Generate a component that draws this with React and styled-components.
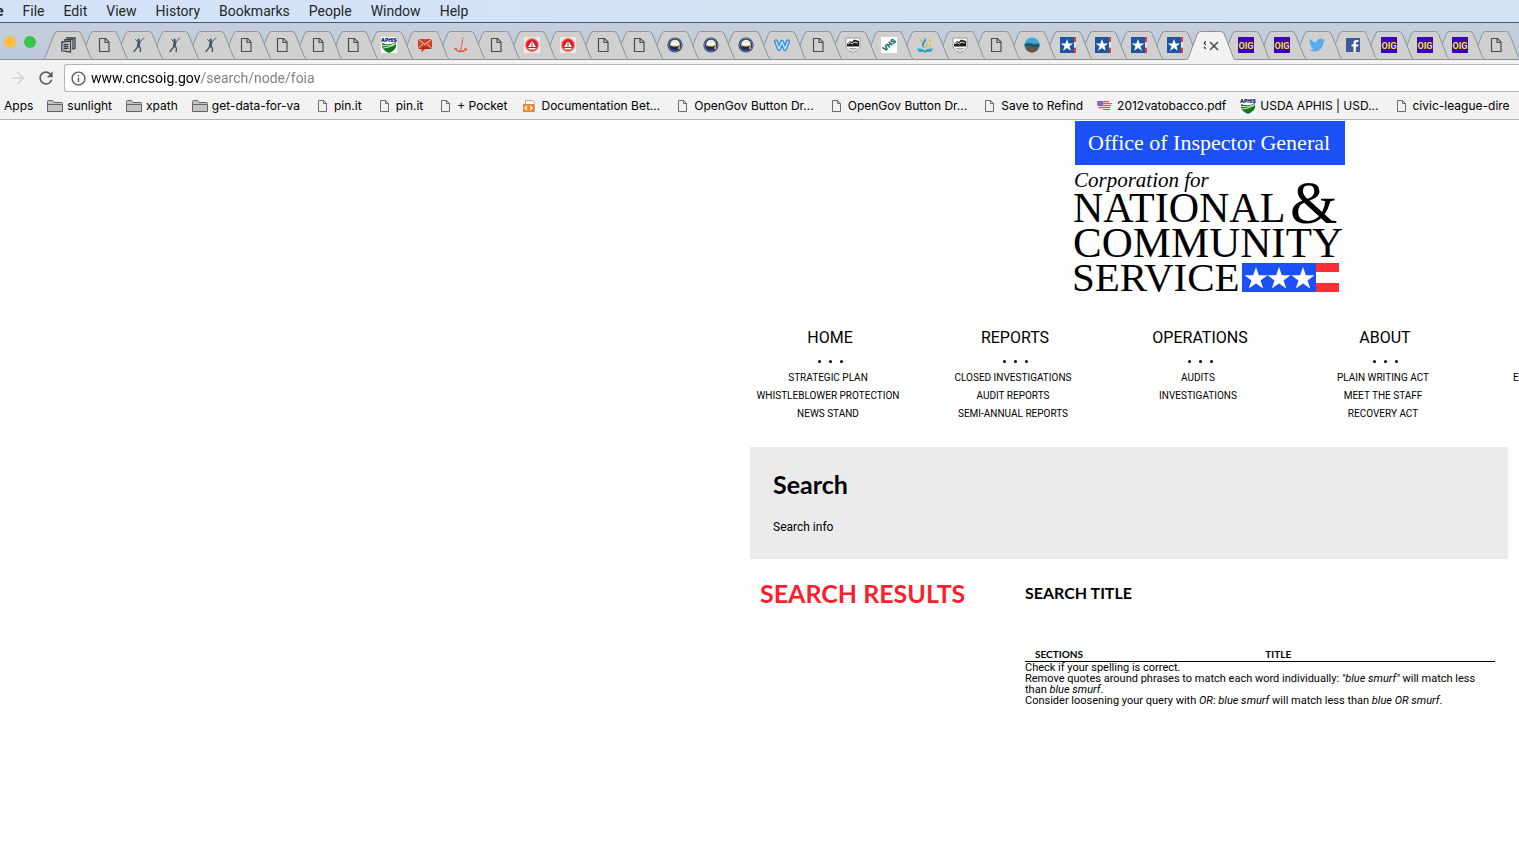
import React from 'react';
import styled, { createGlobalStyle } from 'styled-components';
import { MdRefresh, MdArrowForward, MdInfoOutline } from 'react-icons/md';
import { FaTwitter } from 'react-icons/fa';

const GlobalStyle = createGlobalStyle`
  *, *::before, *::after { box-sizing: border-box; }
  body {
    margin: 0;
    background: #fff;
    color: #000;
    font-family: Roboto, "Liberation Sans", sans-serif;
    overflow-x: hidden;
  }
  ul, h1, h2, h3, p { margin: 0; padding: 0; }
  ul { list-style: none; }
  a { color: inherit; text-decoration: none; }
  button { border: 0; padding: 0; background: none; font: inherit; color: inherit; }
`;

/* ---------- system menu bar ---------- */

const MenuBar = styled.nav`
  display: flex;
  align-items: center;
  gap: 19px;
  height: 23px;
  background: linear-gradient(90deg, #d3e2f5, #d4e3f3);
  border-bottom: 1px solid #34548a;
  color: #24272c;
  font-size: 14px;
  line-height: 22px;
  white-space: nowrap;
  overflow: hidden;
`;
const AppName = styled.strong`
  margin-left: -4px;
`;
const MenuButton = styled.button`
  flex: none;
`;

/* ---------- tab strip ---------- */

const TabStrip = styled.div`
  display: flex;
  height: 37px;
  padding-top: 8px;
  padding-right: 5px;
  background: linear-gradient(#c6cfdb, #bccada);
  border-bottom: 1px solid #8a919b;
`;
const WindowControls = styled.div`
  display: flex;
  gap: 8px;
  flex: none;
  width: 50px;
  padding: 5px 0 0 4px;
`;
const WindowButton = styled.button`
  width: 12px;
  height: 12px;
  border-radius: 50%;
  background: ${(p) => p.$fill};
`;
const Tabs = styled.div`
  display: flex;
  flex: 1;
  min-width: 0;
`;
const Tab = styled.button`
  position: relative;
  z-index: ${(p) => p.$layer};
  flex: 1 1 0;
  min-width: 0;
  display: flex;
  align-items: center;
  justify-content: center;
  height: ${(p) => (p.$active ? 29 : 28)}px;
  font-size: 11px;
`;
const TabOutline = styled.svg`
  position: absolute;
  top: 0;
  left: -7px;
  width: calc(100% + 14px);
  height: 100%;
  fill: ${(p) => (p.$active ? '#f2f2f2' : '#d0d0d0')};
  stroke: #8a919b;
`;
const Favicon = styled.svg`
  position: relative;
  width: 16px;
  height: 16px;
  flex: none;
`;
const ActiveTitle = styled.span`
  position: relative;
  width: 3px;
  margin-left: 5px;
  overflow: hidden;
`;

/* ---------- toolbar ---------- */

const Toolbar = styled.div`
  display: flex;
  align-items: center;
  height: 32px;
  padding-left: 8px;
  padding-top: 4px;
  background: #f2f2f2;
`;
const ToolButton = styled.button`
  display: flex;
  align-items: center;
  justify-content: center;
  width: 20px;
  height: 20px;
  margin-right: 8px;
  color: ${(p) => (p.$disabled ? '#d4d4d4' : '#5f5f5f')};
`;
const AddressBox = styled.label`
  flex: 1;
  display: flex;
  align-items: center;
  gap: 4px;
  height: 28px;
  padding-left: 5px;
  border: 1px solid #b3b3b3;
  border-right: 0;
  border-radius: 3px 0 0 3px;
  background: #fff;
  color: #5a5a5a;
`;
const AddressInput = styled.input`
  flex: 1;
  min-width: 0;
  border: 0;
  padding: 0;
  outline: 0;
  font: 14px/20px Roboto, "Liberation Sans", sans-serif;
  color: transparent;
  background: linear-gradient(90deg, #000 110px, #7c7c7c 110px);
  -webkit-background-clip: text;
  background-clip: text;
`;

/* ---------- bookmarks ---------- */

const BookmarkBar = styled.nav`
  display: flex;
  align-items: center;
  gap: 14px;
  height: 28px;
  padding-left: 4px;
  background: #f2f2f2;
  border-bottom: 1px solid #b1b1b1;
  font: 12px/16px Inter, "Liberation Sans", sans-serif;
  white-space: nowrap;
  overflow: hidden;
`;
const Bookmark = styled.a`
  display: flex;
  align-items: center;
  gap: 4px;
  flex: none;
`;

/* ---------- site ---------- */

const Site = styled.main`
  display: grid;
  grid-template-columns: 750fr 769fr;
  overflow: hidden;
`;
const Page = styled.div`
  grid-column: 2;
  min-width: 0;
`;
const Header = styled.header`
  padding: 1px 0 0 321px;
`;
const Logo = styled.svg`
  display: block;
  width: 276px;
  height: 175px;
  font-family: "Liberation Serif", serif;
`;
const SiteNav = styled.nav`
  display: flex;
  gap: 25px;
  padding: 30px 0 24px;
`;
const NavColumn = styled.section`
  flex: none;
  width: 160px;
  text-align: center;
`;
const NavTitle = styled.h3`
  font-size: 16px;
  font-weight: 400;
  line-height: 24px;
`;
const Dots = styled.p`
  display: flex;
  justify-content: center;
  gap: 8px;
  padding: 10px 0 6px;
`;
const Dot = styled.span`
  width: 3px;
  height: 3px;
  border-radius: 50%;
  background: #000;
`;
const NavList = styled.ul`
  padding-right: 4px;
  font-size: 10px;
  line-height: 18px;
`;
const NavEdge = styled(NavColumn)`
  padding-top: 43px;
  padding-left: 23px;
  text-align: left;
`;
const SearchPanel = styled.section`
  margin-right: 11px;
  padding: 21px 23px 22px;
  background: #ebebeb;
`;
const PanelTitle = styled.h1`
  font: 700 25px/32px Lato, sans-serif;
`;
const PanelText = styled.p`
  margin-top: 17px;
  font-size: 12px;
  line-height: 20px;
`;
const Results = styled.section`
  display: flex;
  padding: 18px 24px 0 10px;
`;
const ResultsTitle = styled.h2`
  flex: none;
  width: 265px;
  color: #fb1f2e;
  font: 700 25px/32px Lato, sans-serif;
`;
const ResultsBody = styled.div`
  flex: 1;
  min-width: 0;
`;
const SearchTitle = styled.h3`
  margin-bottom: 37px;
  font: 700 16px/32px Lato, sans-serif;
`;
const ResultTable = styled.table`
  width: 100%;
  border-collapse: collapse;
  table-layout: fixed;
  font-size: 11px;
  line-height: 11px;

  th {
    padding: 2px 10px 1px;
    border-bottom: 1px solid #000;
    font: 700 10px/12px Lato, sans-serif;
    text-align: left;
  }
  th:first-child { width: 49%; }
  td { padding: 0; }
`;

/* ---------- icons ---------- */

const PageIcon = () => (
  <g fill="none" stroke="#4c4c4c" strokeWidth="1.2">
    <path d="M3.500 1.500h6l3.500 3.500v9.500h-9.500z" />
    <path d="M9 1.500v4h4" />
  </g>
);
const SmallPageIcon = () => (
  <g fill="none" stroke="#6b6b6b">
    <path d="M4.500 2.500h5l3 3v8h-8z" />
    <path d="M9.500 2.500v3h3" />
  </g>
);
const FolderIcon = () => (
  <g fill="#c4c4c4" stroke="#666">
    <path d="M.5 13.500v-10q0-1 1-1h4l1.500 2h7.500q1 0 1 1v8z" />
    <path d="M.5 6.500h15" fill="none" />
  </g>
);
const StackIcon = () => (
  <g fill="#d0d0d0" stroke="#3b4148" strokeWidth="1.3">
    <path d="M6 1l9-.2v10.500l-2 .5" fill="none" />
    <path d="M4 3l9-.6v10" />
    <path d="M1.800 5l8.700-1v11l-8.700-1.200z" />
    <path d="M3.500 7.500h5M3.500 9.500h5M3.500 11.500h5" />
  </g>
);
const RunnerIcon = () => (
  <g fill="none" stroke="#3f5763" strokeLinecap="round">
    <circle cx="7.500" cy="3" r=".8" fill="#3f5763" />
    <path d="M4.500 2.500l2.500 2.500 2 .2L12.500 1" />
    <path d="M8 5.500L7.300 9" strokeWidth="2.800" />
    <path d="M7 9.500l-4 5" strokeWidth="1.300" />
    <path d="M8.200 9.500l1.300 2-.3 3" strokeWidth="1.300" />
  </g>
);
const AphisIcon = () => (
  <g>
    <path d="M0 0h16v16H0z" fill="#fff" />
    <text x="8" y="4.500" textAnchor="middle" fontSize="5" fontWeight="900" fill="#14146e" fontFamily="Inter, sans-serif">APHIS</text>
    <path d="M1 6q7 3 14-1v4q0 4-7 7-7-3-7-7z" fill="#137a1c" />
    <path d="M1 8.500q7 1.500 14-2M2 11q5 0 12-3.500" stroke="#fff" strokeWidth=".8" fill="none" />
  </g>
);
const MailIcon = () => (
  <g>
    <path d="M1 2h14v10H8l-3.500 3.500V12H1z" fill="#cf4129" />
    <path d="M1 2l7 5.500L15 2M1 12l5-5.500M15 12l-5-5.500" stroke="#f5d9d3" strokeWidth=".9" fill="none" />
    <path d="M1 12h14l-4-2H5z" fill="#a52c1b" />
  </g>
);
const AnchorIcon = () => (
  <g fill="none" stroke="#e0513a">
    <path d="M10 .5L7.500 14" strokeDasharray="1.500 .6" strokeWidth="1.200" />
    <path d="M2.500 11.500q1.500 3 5 3t5.500-2.500" strokeWidth="1.300" />
    <path d="M2 13v-2l2 1M11.500 11.500l2 .2v2" strokeWidth=".8" />
  </g>
);
const RedSealIcon = () => (
  <g>
    <path d="M0 0h16v16H0z" fill="#f2e6e2" />
    <circle cx="8" cy="8" r="7" fill="#e9806f" />
    <circle cx="8" cy="8" r="5.800" fill="#e01528" />
    <path d="M8 3.500l4 6.500H4z" fill="#fff" />
    <path d="M7.500 4h1v6h-1z" fill="#27694a" />
    <path d="M4 11h8l-1.500 1.500h-5z" fill="#fff" />
  </g>
);
const BlueSealIcon = () => (
  <g>
    <circle cx="8" cy="8" r="7.600" fill="#263a6c" />
    <circle cx="8" cy="8" r="6.600" fill="none" stroke="#8b93a8" strokeWidth=".7" />
    <circle cx="8" cy="7.500" r="4.800" fill="#efe9d8" />
    <path d="M3.500 9q4.500-1.500 9 0l-1 2.500q-3.500 2-7 0z" fill="#17275c" />
    <path d="M5 6h6v3H5z" fill="#fff" />
    <path d="M5.500 8.500h5v1.200h-5zM11 10l2-1v3h-2z" fill="#d99b2e" />
  </g>
);
const WIcon = () => (
  <g fill="none" strokeLinecap="round" strokeLinejoin="round">
    <path d="M2 4.500l3 7.500 3-7 3 7 3-7.500" stroke="#3191ea" strokeWidth="4.200" />
    <path d="M2 4.500l3 7.500 3-7 3 7 3-7.500" stroke="#d7e3ee" strokeWidth="1.400" />
  </g>
);
const ShieldIcon = () => (
  <g>
    <path d="M1 1h14v8q0 4-7 6.500Q1 13 1 9z" fill="#fff" stroke="#888" strokeWidth=".8" />
    <path d="M2 9.500V7l3-3 2 1 2-2.500 5 1.500v5.500z" fill="#1c1c1c" />
    <path d="M3 7l2-1.500L7.500 7 9 5l4 1" stroke="#ddd" fill="none" />
    <path d="M4 11.500h8M5.500 13h5" stroke="#777" strokeWidth=".7" />
  </g>
);
const VhsIcon = () => (
  <g>
    <path d="M0 0h16v16H0z" fill="#fff" />
    <text x="8" y="10.500" textAnchor="middle" fontSize="7" fontWeight="900" fill="#0b6a5c" fontFamily="Inter, sans-serif" transform="rotate(-42 8 8)">VHS</text>
  </g>
);
const FlameBookIcon = () => (
  <g>
    <path d="M0 11.500q5-.5 8 2 3-2.500 8-2L14 15q-4-.5-6 .8Q6 14.500 2 15z" fill="#23a5c9" />
    <path d="M8.500.5Q10 3 8 5.500T7.500 11Q3.500 9 5.500 5.500 7 3.500 8.500.5z" fill="#1fa3df" />
    <path d="M10 5.500q1.500 3-1.500 6-1.500-2 1.500-6z" fill="#f0b429" />
    <path d="M4 1.500l.7 1.300 1.300.7-1.300.7L4 5.500l-.7-1.300L2 3.500l1.300-.7zM13 1.500l.7 1.300 1.800.7-1.800.7-.7 1.300-.7-1.300-1.300-.7 1.300-.7zM13 7.500l1.500 1.500-1.500 1.500L11.500 9z" fill="#efb93f" />
  </g>
);
const RiverIcon = () => (
  <g>
    <circle cx="8" cy="8" r="7.500" fill="#3fa9dc" />
    <path d="M.6 7q3-2 7-1t7.800 0q.4 4-1.400 6H2Q.5 10 .6 7z" fill="#317255" />
    <path d="M.7 8.500q3.500-1.500 7.300 0t7.300-.5" stroke="#28417f" strokeWidth="1.600" fill="none" />
    <path d="M2 12.200q2-2.500 6-2t6 2q-2.500 3.300-6 3.300t-6-3.300z" fill="#6b5546" />
  </g>
);
const star = 'M0-5L1.200-1.600H4.800L1.900.6 3 4 0 1.900-3 4-1.900.6-4.800-1.600H-1.200z';
const StarIcon = () => (
  <g>
    <path d="M0 0h14v16H0z" fill="#1d55a3" />
    <path d="M14 0h2v5h-2zM14 10.500h2V16h-2z" fill="#e23b41" />
    <path d="M14 5h2v5.500h-2z" fill="#e8e4ea" />
    <path d={star} fill="#fff" transform="translate(7 8.500) scale(1.300)" />
  </g>
);
const OigIcon = () => (
  <g>
    <path d="M0 0h16v16H0z" fill="#3b06b8" />
    <text x="8" y="12" textAnchor="middle" fontSize="9" fontWeight="700" fill="#f4e81d" fontFamily="Roboto, sans-serif">OIG</text>
  </g>
);
const FacebookIcon = () => (
  <g>
    <path d="M1 1h14v14H1z" fill="#3d5a98" />
    <path d="M8.500 15V9.500h-2v-2h2V6q0-3 3-3h2v2h-1.400q-1.300 0-1.300 1.300v1.200h2.600l-.4 2h-2.200V15z" fill="#fff" />
  </g>
);
const TwitterIcon = () => <FaTwitter size={16} color="#55acee" />;
const CloseIcon = () => <path d="M4 4l8 8M12 4l-8 8" stroke="#4f4f4f" strokeWidth="1.600" />;
const CodeDocIcon = () => (
  <g>
    <path d="M4.500 2.500h7l2 2v9h-9z" fill="#fff" stroke="#aaa" />
    <path d="M2 6h11v8H2z" fill="#ee8a2c" />
    <path d="M6 8l-2 2 2 2M9 8l2 2-2 2" stroke="#fff" strokeWidth="1.300" fill="none" />
  </g>
);
const UsaIcon = () => (
  <g>
    <path d="M0 3h11l1 1.500L15.500 3 15 6l-2 3 1 4-3-2-3 1-1.500 1-2-2.500L1 9.500 0 6z" fill="#fff" />
    <path d="M6 3.700h6M6 5.700h9M.5 7.700h13.500M1.500 9.700h11.500M6 11.500h7" stroke="#e0525b" strokeWidth="1.200" />
    <path d="M0 3h6v4.500H.3z" fill="#6f6fd8" />
  </g>
);

const icons = {
  page: PageIcon, small: SmallPageIcon, folder: FolderIcon, stack: StackIcon, runner: RunnerIcon,
  aphis: AphisIcon, mail: MailIcon, anchor: AnchorIcon, redSeal: RedSealIcon, blueSeal: BlueSealIcon,
  w: WIcon, shield: ShieldIcon, vhs: VhsIcon, flame: FlameBookIcon, river: RiverIcon, star: StarIcon,
  oig: OigIcon, twitter: TwitterIcon, facebook: FacebookIcon, code: CodeDocIcon, usa: UsaIcon,
};

function Icon({ name }) {
  const Drawing = icons[name];
  return <Favicon viewBox="0 0 16 16" aria-hidden="true"><Drawing /></Favicon>;
}

/* ---------- data ---------- */

const menus = ['File', 'Edit', 'View', 'History', 'Bookmarks', 'People', 'Window', 'Help'];

const tabs = (
  'stack page runner runner runner page page page page aphis mail anchor page redSeal redSeal page page ' +
  'blueSeal blueSeal blueSeal w page shield vhs flame shield page river star star star star active ' +
  'oig oig twitter facebook oig oig oig page'
).split(' ');

const bookmarks = [
  [null, 'Apps'],
  ['folder', 'sunlight'],
  ['folder', 'xpath'],
  ['folder', 'get-data-for-va'],
  ['small', 'pin.it'],
  ['small', 'pin.it'],
  ['small', '+ Pocket'],
  ['code', 'Documentation Bet...'],
  ['small', 'OpenGov Button Dr...'],
  ['small', 'OpenGov Button Dr...'],
  ['small', 'Save to Refind'],
  ['usa', '2012vatobacco.pdf'],
  ['aphis', 'USDA APHIS | USD...'],
  ['small', 'civic-league-dire'],
];

const sections = [
  ['HOME', ['STRATEGIC PLAN', 'WHISTLEBLOWER PROTECTION', 'NEWS STAND']],
  ['REPORTS', ['CLOSED INVESTIGATIONS', 'AUDIT REPORTS', 'SEMI-ANNUAL REPORTS']],
  ['OPERATIONS', ['AUDITS', 'INVESTIGATIONS']],
  ['ABOUT', ['PLAIN WRITING ACT', 'MEET THE STAFF', 'RECOVERY ACT']],
];

/* ---------- parts ---------- */

function BrowserTab({ kind, layer }) {
  const active = kind === 'active';
  return (
    <Tab $active={active} $layer={active ? 100 : layer} aria-label={active ? 'Search' : `${kind} tab`}>
      <TabOutline $active={active} viewBox="0 0 50 29" preserveAspectRatio="none" aria-hidden="true">
        <path d="M.5 29Q2 28 3 25L11.500 3Q12.500.5 15 .5H35Q37.500.5 38.500 3L47 25Q48 28 49.500 29" />
      </TabOutline>
      {active ? (
        <>
          <ActiveTitle>S</ActiveTitle>
          <Favicon viewBox="0 0 16 16" aria-hidden="true"><CloseIcon /></Favicon>
        </>
      ) : <Icon name={kind} />}
    </Tab>
  );
}

function SiteLogo() {
  return (
    <Logo viewBox="0 0 276 175" role="img" aria-label="Office of Inspector General">
      <path d="M4 0h270v44H4z" fill="#1a50f5" />
      <text x="17" y="29" fontSize="22" fill="#fff">Office of Inspector General</text>
      <text x="3" y="66" fontSize="21" fontStyle="italic">Corporation for</text>
      <text x="2" y="101" fontSize="42">NATIONAL</text>
      <text x="219" y="102" fontSize="61">&amp;</text>
      <text x="2" y="136" fontSize="43">COMMUNITY</text>
      <text x="1" y="170" fontSize="41">SERVICE</text>
      <path d="M171 142h74v29h-74z" fill="#1a50f5" />
      <path d="M245 142h23v9h-23zM245 162h23v9h-23z" fill="#fb2f35" />
      {[185, 208, 232].map((x) => (
        <path key={x} d={star} fill="#fff" transform={`translate(${x} 158) scale(2.400)`} />
      ))}
    </Logo>
  );
}

export default function App() {
  return (
    <>
      <GlobalStyle />
      <MenuBar>
        <AppName>e</AppName>
        {menus.map((m) => <MenuButton key={m}>{m}</MenuButton>)}
      </MenuBar>
      <TabStrip>
        <WindowControls>
          <WindowButton $fill="#fdbd3f" aria-label="Minimize" />
          <WindowButton $fill="#33c748" aria-label="Zoom" />
        </WindowControls>
        <Tabs>
          {tabs.map((kind, i) => <BrowserTab key={i} kind={kind} layer={tabs.length - i} />)}
        </Tabs>
      </TabStrip>
      <Toolbar>
        <ToolButton $disabled aria-label="Forward"><MdArrowForward size={20} /></ToolButton>
        <ToolButton aria-label="Reload"><MdRefresh size={20} /></ToolButton>
        <AddressBox>
          <MdInfoOutline size={17} />
          <AddressInput aria-label="Address" defaultValue="www.cncsoig.gov/search/node/foia" spellCheck="false" />
        </AddressBox>
      </Toolbar>
      <BookmarkBar>
        {bookmarks.map(([icon, label], i) => (
          <Bookmark key={i} href="#">
            {icon && <Icon name={icon} />}
            <span>{label}</span>
          </Bookmark>
        ))}
      </BookmarkBar>
      <Site>
        <Page>
          <Header><SiteLogo /></Header>
          <SiteNav>
            {sections.map(([title, links]) => (
              <NavColumn key={title}>
                <NavTitle><a href="#">{title}</a></NavTitle>
                <Dots><Dot /><Dot /><Dot /></Dots>
                <NavList>
                  {links.map((l) => <li key={l}><a href="#">{l}</a></li>)}
                </NavList>
              </NavColumn>
            ))}
            <NavEdge>
              <NavList><li><a href="#">EA</a></li></NavList>
            </NavEdge>
          </SiteNav>
          <SearchPanel>
            <PanelTitle>Search</PanelTitle>
            <PanelText>Search info</PanelText>
          </SearchPanel>
          <Results>
            <ResultsTitle>SEARCH RESULTS</ResultsTitle>
            <ResultsBody>
              <SearchTitle>SEARCH TITLE</SearchTitle>
              <ResultTable>
                <thead>
                  <tr><th>SECTIONS</th><th>TITLE</th></tr>
                </thead>
                <tbody>
                  <tr>
                    <td colSpan={2}>
                      <ul>
                        <li>Check if your spelling is correct.</li>
                        <li>Remove quotes around phrases to match each word individually: <em>"blue smurf"</em> will match less than <em>blue smurf</em>.</li>
                        <li>Consider loosening your query with <em>OR</em>: <em>blue smurf</em> will match less than <em>blue OR smurf</em>.</li>
                      </ul>
                    </td>
                  </tr>
                </tbody>
              </ResultTable>
            </ResultsBody>
          </Results>
        </Page>
      </Site>
    </>
  );
}
